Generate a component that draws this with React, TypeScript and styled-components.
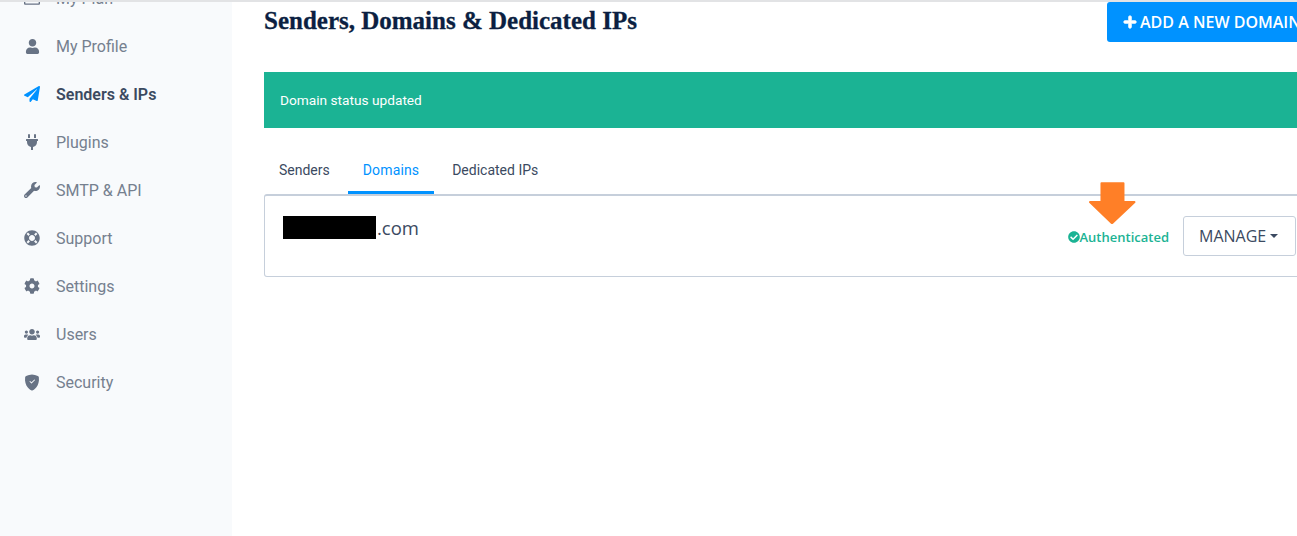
import styled, { createGlobalStyle } from "styled-components";
import { ReactNode } from "react";
import {
  FaCheckCircle,
  FaCog,
  FaLifeRing,
  FaPaperPlane,
  FaPlug,
  FaPlus,
  FaRegCreditCard,
  FaUser,
  FaUsers,
  FaWrench,
} from "react-icons/fa";
import { BsShieldFillCheck } from "react-icons/bs";

const GlobalStyle = createGlobalStyle`
  html, body {
    margin: 0;
    padding: 0;
    height: 100%;
    overflow: hidden;
    background: #fff;
  }
  #root {
    height: 100%;
  }
  * {
    box-sizing: border-box;
  }
`;

type NavEntry = {
  label: string;
  icon: ReactNode;
  active?: boolean;
};

const NAV: NavEntry[] = [
  { label: "My Plan", icon: <FaRegCreditCard size={17} /> },
  { label: "My Profile", icon: <FaUser size={15} /> },
  { label: "Senders & IPs", icon: <FaPaperPlane size={16} />, active: true },
  { label: "Plugins", icon: <FaPlug size={16} /> },
  { label: "SMTP & API", icon: <FaWrench size={16} /> },
  { label: "Support", icon: <FaLifeRing size={16} /> },
  { label: "Settings", icon: <FaCog size={16} /> },
  { label: "Users", icon: <FaUsers size={17} /> },
  { label: "Security", icon: <BsShieldFillCheck size={17} /> },
];

export default function App() {
  return (
    <Page>
      <GlobalStyle />
      <Sidebar>
        {NAV.map((item) => (
          <NavItem key={item.label} $active={item.active}>
            <NavIcon $active={item.active}>{item.icon}</NavIcon>
            {item.label}
          </NavItem>
        ))}
      </Sidebar>
      <Main>
        <Header>
          <Title>Senders, Domains &amp; Dedicated IPs</Title>
          <AddButton>
            <PlusIcon />
            ADD A NEW DOMAIN
          </AddButton>
        </Header>
        <Alert>Domain status updated</Alert>
        <Tabs>
          <Tab>Senders</Tab>
          <Tab $active>Domains</Tab>
          <Tab>Dedicated IPs</Tab>
        </Tabs>
        <DomainCard>
          <DomainName>
            <Redacted />
            .com
          </DomainName>
          <DomainActions>
            <Status>
              <FaCheckCircle size={12} />
              Authenticated
            </Status>
            <ManageButton>
              MANAGE
              <Caret />
            </ManageButton>
          </DomainActions>
          <Arrow width="48" height="44" viewBox="0 0 50 44">
            <path
              d="M13 1.5a1 1 0 0 1 1-1h23a1 1 0 0 1 1 1V20h10.500a1 1 0 0 1 .7 1.700L26 43.500a1.500 1.500 0 0 1-2 0L1.300 21.700a1 1 0 0 1 .7-1.700H13z"
              fill="#ff7f27"
            />
          </Arrow>
        </DomainCard>
      </Main>
    </Page>
  );
}

const Page = styled.div`
  display: flex;
  height: 100%;
  border-top: 2px solid #e2e3e5;
  overflow: hidden;
`;

const Sidebar = styled.nav`
  flex: 0 0 232px;
  background-color: #f8fafc;
  overflow: hidden;

  & > :first-child {
    margin-top: -28px;
  }
`;

const NavItem = styled.div<{ $active?: boolean }>`
  display: flex;
  align-items: center;
  height: 48px;
  padding-left: 24px;
  font-family: Roboto, "Liberation Sans", sans-serif;
  font-size: 16px;
  font-weight: ${({ $active }) => ($active ? 600 : 400)};
  color: ${({ $active }) => ($active ? "#3b4a61" : "#75808f")};
`;

const NavIcon = styled.span<{ $active?: boolean }>`
  display: flex;
  align-items: center;
  justify-content: center;
  width: 16px;
  margin-right: 16px;
  color: ${({ $active }) => ($active ? "#0092ff" : "#687385")};
`;

const Main = styled.main`
  flex: 0 0 auto;
  width: 1051px;
  margin-left: 32px;
`;

const Header = styled.header`
  display: flex;
  justify-content: space-between;
  align-items: flex-start;
  height: 70px;
`;

const Title = styled.h1`
  margin: 3px 0 0;
  font-family: "Liberation Serif", serif;
  font-size: 25px;
  line-height: 32px;
  font-weight: 700;
  color: #0b1f42;
  -webkit-text-stroke: 0.3px #0b1f42;
`;

const AddButton = styled.button`
  display: flex;
  align-items: center;
  gap: 3px;
  width: 208px;
  height: 40px;
  padding: 0 0 0 16px;
  border: none;
  border-radius: 3px;
  background-color: #0092ff;
  color: #fff;
  font-family: "Open Sans", sans-serif;
  font-size: 16px;
  font-weight: 600;
  white-space: nowrap;
`;

const PlusIcon = styled(FaPlus)`
  width: 14px;
  height: 14px;
  stroke: #fff;
  stroke-width: 30;
`;

const Alert = styled.div`
  display: flex;
  align-items: center;
  height: 56px;
  padding-left: 16px;
  background-color: #1bb394;
  color: #fff;
  font-family: Roboto, sans-serif;
  font-size: 13.7px;
`;

const Tabs = styled.div`
  display: flex;
  margin-top: 22px;
  height: 44px;
`;

const Tab = styled.div<{ $active?: boolean }>`
  position: relative;
  z-index: 1;
  display: flex;
  align-items: center;
  justify-content: center;
  height: 44px;
  padding: 0 15px 1px;
  margin: 0 ${({ $active }) => ($active ? "3px" : "0")};
  border-bottom: 3px solid ${({ $active }) => ($active ? "#0092ff" : "transparent")};
  font-family: Roboto, sans-serif;
  font-size: 14px;
  letter-spacing: ${({ $active }) => ($active ? "0.01em" : "0")};
  color: ${({ $active }) => ($active ? "#0092ff" : "#3b4a61")};
`;

const DomainCard = styled.section`
  position: relative;
  display: flex;
  justify-content: space-between;
  align-items: flex-start;
  height: 83px;
  padding: 20px 18px 0 18px;
  border: 1px solid #c6cfdb;
  border-top-width: 2px;
  border-radius: 3px;
`;

const DomainName = styled.div`
  display: flex;
  align-items: center;
  height: 23px;
  font-family: "Open Sans", sans-serif;
  font-size: 18.500px;
  color: #3b4a61;
`;

const Redacted = styled.span`
  display: block;
  width: 93px;
  height: 23px;
  margin-right: 1px;
  background-color: #000;
`;

const DomainActions = styled.div`
  display: flex;
  align-items: center;
  gap: 14px;
`;

const Status = styled.span`
  display: flex;
  align-items: center;
  gap: 0;
  margin-top: 2px;
  font-family: "Open Sans", sans-serif;
  font-size: 13px;
  font-weight: 600;
  color: #1bb394;
`;

const ManageButton = styled.button`
  display: flex;
  align-items: center;
  width: 113px;
  height: 40px;
  padding: 0 0 0 15px;
  border: 1px solid #c6cfdb;
  border-radius: 3px;
  background: #fff;
  font-family: "Open Sans", sans-serif;
  font-size: 16px;
  color: #3b4a61;
`;

const Caret = styled.span`
  width: 0;
  height: 0;
  margin-left: 4px;
  border-left: 4px solid transparent;
  border-right: 4px solid transparent;
  border-top: 4px solid #3b4a61;
`;

const Arrow = styled.svg`
  position: absolute;
  top: -15px;
  right: 178px;
`;
